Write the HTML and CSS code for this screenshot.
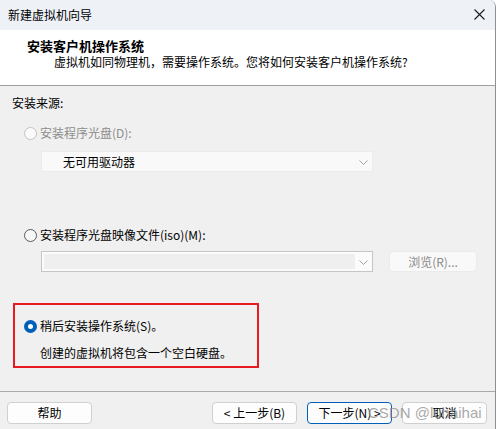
FILE: index.html
```html
<!DOCTYPE html>
<html lang="zh-CN">
<head>
  <meta charset="UTF-8" />
  <title>新建虚拟机向导</title>
  <link rel="stylesheet" href="styles.css">
</head>
<body>

  <div class="window">
    <div class="titlebar">
      <span>新建虚拟机向导</span>
      <svg class="close" width="11" height="11" viewBox="0 0 11 11">
        <path d="M0.5 0.5 L10.5 10.5 M10.5 0.5 L0.5 10.5" stroke="#1a1a1a" stroke-width="1.1" fill="none" />
      </svg>
    </div>

    <div class="header">
      <div class="header-title">安装客户机操作系统</div>
      <div class="header-sub">虚拟机如同物理机，需要操作系统。您将如何安装客户机操作系统?</div>
    </div>

    <div class="content">
      <div class="section-label">安装来源:</div>

      <label class="radio-row disabled first">
        <span class="radio"></span>
        <span>安装程序光盘(D):</span>
      </label>
      <div class="field-row">
        <div class="select flat">
          <span class="select-text">无可用驱动器</span>
          <svg class="chevron" width="9" height="5" viewBox="0 0 9 5"><path d="M0.5 0.5 L4.5 4.5 L8.5 0.5" stroke="#a0a0a0" fill="none" /></svg>
        </div>
      </div>

      <label class="radio-row second">
        <span class="radio"></span>
        <span>安装程序光盘映像文件(iso)(M):</span>
      </label>
      <div class="field-row iso-row">
        <div class="select boxed">
          <span class="select-inner"></span>
          <svg class="chevron" width="9" height="5" viewBox="0 0 9 5"><path d="M0.5 0.5 L4.5 4.5 L8.5 0.5" stroke="#a0a0a0" fill="none" /></svg>
        </div>
        <div class="btn disabled browse">浏览(R)...</div>
      </div>

      <div class="highlight">
        <label class="radio-row">
          <span class="radio checked"></span>
          <span>稍后安装操作系统(S)。</span>
        </label>
        <div class="note">创建的虚拟机将包含一个空白硬盘。</div>
      </div>
    </div>

    <div class="footer">
      <div class="btn help">帮助</div>
      <div class="nav">
        <div class="btn">&lt; 上一步(B)</div>
        <div class="btn primary">下一步(N) &gt;</div>
        <div class="btn">取消</div>
      </div>
      <span class="watermark">CSDN @luhaihai</span>
    </div>
  </div>

</body>
</html>
```

FILE: styles.css
```css
body {
  margin: 0;
  background: #ffffff;
  font-family: "Noto Sans CJK SC", "Liberation Sans", sans-serif;
  font-size: 12px;
  line-height: 16px;
  color: #000;
}

.window {
  width: 495px;
  height: 429px;
  border-right: 1px solid #8f8f8f;
  border-top-right-radius: 7px;
  background: #f0f0f0;
  display: flex;
  flex-direction: column;
  overflow: hidden;
}

.titlebar {
  height: 30px;
  flex: none;
  background: #eef2f7;
  display: flex;
  align-items: center;
  justify-content: space-between;
  padding: 0 10px 0 8px;
}

.close {
  margin-top: -2px;
}

.header {
  height: 56px;
  flex: none;
  box-sizing: border-box;
  background: #fff;
  border-bottom: 1px solid #a0a0a0;
  padding-top: 8px;
}

.header-title {
  font-size: 13px;
  font-weight: bold;
  padding-left: 27px;
}

.header-sub {
  padding-left: 54px;
}

.content {
  flex: 1;
  padding-top: 9px;
}

.section-label {
  padding-left: 12px;
}

.radio-row {
  display: flex;
  align-items: center;
  gap: 3px;
  padding-left: 24px;
}

.radio-row.first {
  margin-top: 14px;
}

.radio-row.second {
  margin-top: 55px;
}

.radio-row.disabled {
  color: #8d8d8d;
}

.radio {
  width: 13px;
  height: 13px;
  box-sizing: border-box;
  border-radius: 50%;
  border: 1px solid #5c5c5c;
  background: #f7f7f7;
}

.disabled .radio {
  border-color: #c2c2c2;
  background: #fafafa;
}

.radio.checked {
  border: 4px solid #005fb8;
  background: #fff;
}

.field-row {
  display: flex;
  gap: 16px;
  padding-left: 41px;
  margin-top: 10px;
}

.field-row.iso-row {
  margin-top: 8px;
}

.select {
  width: 332px;
  height: 21px;
  box-sizing: border-box;
  display: flex;
  align-items: center;
  justify-content: space-between;
  padding-right: 4px;
}

.select.flat {
  background: #f9f9f9;
  border: 1px solid #ececec;
  padding-left: 21px;
}

.select.boxed {
  background: #fbfbfb;
  border: 1px solid #c6c6c6;
  padding-left: 2px;
}

.select-inner {
  width: 311px;
  height: 15px;
  background: #efefef;
}

.chevron {
  margin-top: 1px;
}

.btn {
  width: 85px;
  height: 22px;
  box-sizing: border-box;
  border: 1px solid #d0d0d0;
  border-radius: 4px;
  background: #fdfdfd;
  display: flex;
  align-items: center;
  justify-content: center;
}

.btn.browse {
  width: 88px;
  height: 21px;
  color: #8a8a8a;
  background: #f9f9f9;
  border-color: #ebebeb;
}

.btn.primary {
  border-color: #005fb8;
}

.highlight {
  width: 246px;
  height: 65px;
  box-sizing: border-box;
  margin: 31px 0 0 13px;
  border: 2px solid #e81b23;
  padding-top: 13px;
}

.highlight .radio-row {
  padding-left: 9px;
}

.note {
  margin-top: 11px;
  padding-left: 25px;
}

.footer {
  position: relative;
  height: 38px;
  flex: none;
  box-sizing: border-box;
  border-top: 1px solid #a9a9a9;
  display: flex;
  justify-content: space-between;
  padding: 10px 8px 0 7px;
}

.nav {
  display: flex;
  gap: 10px;
}

.watermark {
  position: absolute;
  left: 368px;
  top: 12px;
  font-family: "Liberation Sans", sans-serif;
  font-size: 15px;
  line-height: 18px;
  color: rgba(140, 140, 140, 0.75);
  pointer-events: none;
}
```
